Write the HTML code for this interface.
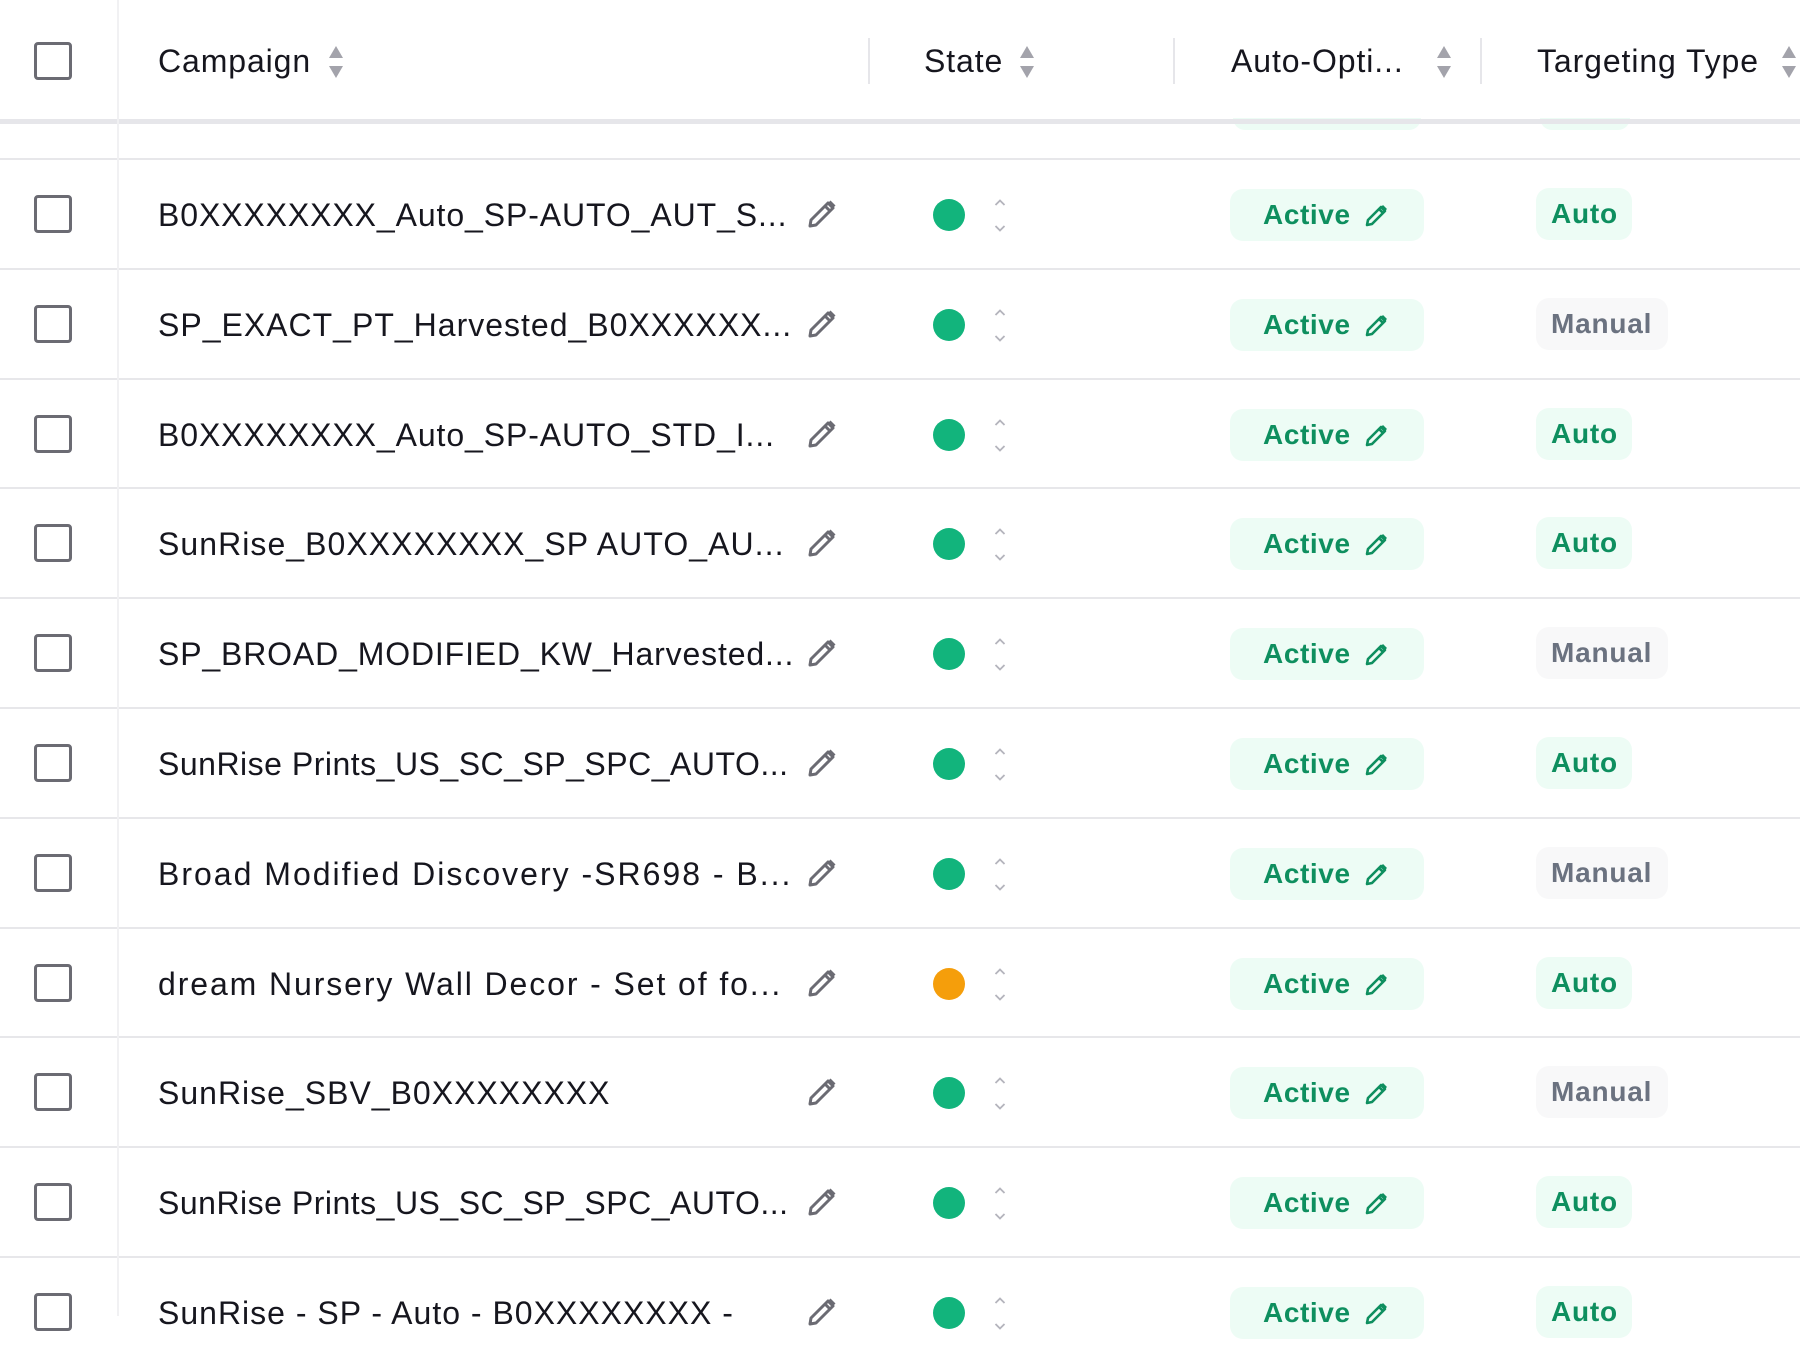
<!DOCTYPE html>
<html><head><meta charset="utf-8"><style>
*{box-sizing:border-box;margin:0;padding:0}
body{width:1800px;height:1316px;overflow:hidden;background:#fff;font-family:"Liberation Sans",sans-serif;position:relative;color:#1a1a22}
.abs{position:absolute}
.vline{position:absolute;left:117px;top:0;width:2px;height:1316px;background:#f1f1f3}
.hdrline{position:absolute;left:0;top:119px;width:1800px;height:5px;background:#e6e6ea}
.hdiv{position:absolute;top:38px;width:2px;height:46px;background:#e6e6ea}
.ht{position:absolute;top:42px;font-size:32px;letter-spacing:.9px;line-height:38px;color:#16161e}
.sort{position:absolute;top:44px;width:18px;height:36px}
.cb{position:absolute;left:34px;width:38px;height:38px;border:3.5px solid #6b6b73;border-radius:4px;background:#fff}
.row{position:absolute;left:0;width:1800px;height:110px;border-top:2px solid #e7e7ea}
.row .cb{top:35px}
.name{position:absolute;left:158px;top:36px;font-size:32px;letter-spacing:1px;line-height:38px;white-space:nowrap;color:#16161e}
.pen{position:absolute;left:804px;top:38px;width:34px;height:34px}
.dot{position:absolute;left:933px;top:39px;width:32px;height:32px;border-radius:50%;background:#12b47c}
.dot.o{background:#f59e0b}
.chev{position:absolute;left:992px;top:28px;width:16px;height:54px}
.pill{position:absolute;left:1230px;top:29px;width:194px;height:52px;border-radius:13px;background:#edfcf5;color:#0e8f5f;font-weight:bold;font-size:28px;letter-spacing:.6px;line-height:52px;padding-left:33px}
.pill svg{position:absolute;left:134px;top:13px}
.tag{position:absolute;left:1536px;top:28px;height:52px;border-radius:13px;font-weight:bold;font-size:28px;letter-spacing:.8px;line-height:52px;padding:0 15px}
.auto{background:#edfcf5;color:#0e8f5f;width:96px}
.man{background:#f8f8f9;color:#6b7280;width:132px}
</style></head><body>
<div class="vline"></div>
<div class="cb" style="top:42px"></div>
<div class="ht" style="left:158px">Campaign</div>
<svg class="sort" style="left:327px" viewBox="0 0 18 36"><path d="M9 2 L16 14 H2 Z M9 34 L16 22 H2 Z" fill="#a3a3ab"/></svg>
<div class="hdiv" style="left:868px"></div>
<div class="ht" style="left:924px">State</div>
<svg class="sort" style="left:1018px" viewBox="0 0 18 36"><path d="M9 2 L16 14 H2 Z M9 34 L16 22 H2 Z" fill="#a3a3ab"/></svg>
<div class="hdiv" style="left:1173px"></div>
<div class="ht" style="left:1231px">Auto-Opti...</div>
<svg class="sort" style="left:1435px" viewBox="0 0 18 36"><path d="M9 2 L16 14 H2 Z M9 34 L16 22 H2 Z" fill="#a3a3ab"/></svg>
<div class="hdiv" style="left:1480px"></div>
<div class="ht" style="left:1537px">Targeting Type</div>
<svg class="sort" style="left:1780px" viewBox="0 0 18 36"><path d="M9 2 L16 14 H2 Z M9 34 L16 22 H2 Z" fill="#a3a3ab"/></svg>
<div class="abs" style="left:1233px;top:118px;width:188px;height:12px;border-radius:0 0 12px 12px;background:#edfcf5"></div>
<div class="abs" style="left:1540px;top:118px;width:90px;height:12px;border-radius:0 0 12px 12px;background:#edfcf5"></div>
<div class="hdrline"></div>

<svg width="0" height="0" style="position:absolute"><defs>
<g id="pen"><path d="M6 28 L7 22 L24 5 L29 10 L12 27 Z M21 8 L26 13" fill="none" stroke="#6b6b73" stroke-width="3" stroke-linejoin="round"/><path d="M24 5 L26.5 2.5 L31.5 7.5 L29 10 Z" fill="#6b6b73"/></g>
<g id="chev"><path d="M3.5 17 L8 12.5 L12.5 17 M3.5 38 L8 42.5 L12.5 38" fill="none" stroke="#b4b4bc" stroke-width="1.8"/></g>
<g id="ppen"><path d="M3 23 L4 18 L17 5 L21 9 L8 22 Z M15 7 L19 11" fill="none" stroke="#0e8f5f" stroke-width="2.6" stroke-linejoin="round"/><path d="M17 5 L19 3 L23 7 L21 9 Z" fill="#0e8f5f"/></g>
</defs></svg>

<div class="row" style="top:158px"><div class="cb"></div><div class="name" style="letter-spacing:.9px">B0XXXXXXXX_Auto_SP-AUTO_AUT_S...</div><svg class="pen" viewBox="0 0 34 34"><use href="#pen"/></svg><div class="dot"></div><svg class="chev" viewBox="0 0 16 54"><use href="#chev"/></svg><div class="pill">Active<svg width="26" height="26" viewBox="0 0 26 26"><use href="#ppen"/></svg></div><div class="tag auto">Auto</div></div>
<div class="row" style="top:267.8px"><div class="cb"></div><div class="name" style="letter-spacing:1px">SP_EXACT_PT_Harvested_B0XXXXXX...</div><svg class="pen" viewBox="0 0 34 34"><use href="#pen"/></svg><div class="dot"></div><svg class="chev" viewBox="0 0 16 54"><use href="#chev"/></svg><div class="pill">Active<svg width="26" height="26" viewBox="0 0 26 26"><use href="#ppen"/></svg></div><div class="tag man">Manual</div></div>
<div class="row" style="top:377.6px"><div class="cb"></div><div class="name" style="letter-spacing:.9px">B0XXXXXXXX_Auto_SP-AUTO_STD_I...</div><svg class="pen" viewBox="0 0 34 34"><use href="#pen"/></svg><div class="dot"></div><svg class="chev" viewBox="0 0 16 54"><use href="#chev"/></svg><div class="pill">Active<svg width="26" height="26" viewBox="0 0 26 26"><use href="#ppen"/></svg></div><div class="tag auto">Auto</div></div>
<div class="row" style="top:487.4px"><div class="cb"></div><div class="name" style="letter-spacing:1.05px">SunRise_B0XXXXXXXX_SP AUTO_AU...</div><svg class="pen" viewBox="0 0 34 34"><use href="#pen"/></svg><div class="dot"></div><svg class="chev" viewBox="0 0 16 54"><use href="#chev"/></svg><div class="pill">Active<svg width="26" height="26" viewBox="0 0 26 26"><use href="#ppen"/></svg></div><div class="tag auto">Auto</div></div>
<div class="row" style="top:597.2px"><div class="cb"></div><div class="name" style="letter-spacing:.85px">SP_BROAD_MODIFIED_KW_Harvested...</div><svg class="pen" viewBox="0 0 34 34"><use href="#pen"/></svg><div class="dot"></div><svg class="chev" viewBox="0 0 16 54"><use href="#chev"/></svg><div class="pill">Active<svg width="26" height="26" viewBox="0 0 26 26"><use href="#ppen"/></svg></div><div class="tag man">Manual</div></div>
<div class="row" style="top:707px"><div class="cb"></div><div class="name" style="letter-spacing:.5px">SunRise Prints_US_SC_SP_SPC_AUTO...</div><svg class="pen" viewBox="0 0 34 34"><use href="#pen"/></svg><div class="dot"></div><svg class="chev" viewBox="0 0 16 54"><use href="#chev"/></svg><div class="pill">Active<svg width="26" height="26" viewBox="0 0 26 26"><use href="#ppen"/></svg></div><div class="tag auto">Auto</div></div>
<div class="row" style="top:816.8px"><div class="cb"></div><div class="name" style="letter-spacing:2px">Broad Modified Discovery -SR698 - B...</div><svg class="pen" viewBox="0 0 34 34"><use href="#pen"/></svg><div class="dot"></div><svg class="chev" viewBox="0 0 16 54"><use href="#chev"/></svg><div class="pill">Active<svg width="26" height="26" viewBox="0 0 26 26"><use href="#ppen"/></svg></div><div class="tag man">Manual</div></div>
<div class="row" style="top:926.6px"><div class="cb"></div><div class="name" style="letter-spacing:1.9px">dream Nursery Wall Decor - Set of fo...</div><svg class="pen" viewBox="0 0 34 34"><use href="#pen"/></svg><div class="dot o"></div><svg class="chev" viewBox="0 0 16 54"><use href="#chev"/></svg><div class="pill">Active<svg width="26" height="26" viewBox="0 0 26 26"><use href="#ppen"/></svg></div><div class="tag auto">Auto</div></div>
<div class="row" style="top:1036.4px"><div class="cb"></div><div class="name" style="letter-spacing:1px">SunRise_SBV_B0XXXXXXXX</div><svg class="pen" viewBox="0 0 34 34"><use href="#pen"/></svg><div class="dot"></div><svg class="chev" viewBox="0 0 16 54"><use href="#chev"/></svg><div class="pill">Active<svg width="26" height="26" viewBox="0 0 26 26"><use href="#ppen"/></svg></div><div class="tag man">Manual</div></div>
<div class="row" style="top:1146.2px"><div class="cb"></div><div class="name" style="letter-spacing:.5px">SunRise Prints_US_SC_SP_SPC_AUTO...</div><svg class="pen" viewBox="0 0 34 34"><use href="#pen"/></svg><div class="dot"></div><svg class="chev" viewBox="0 0 16 54"><use href="#chev"/></svg><div class="pill">Active<svg width="26" height="26" viewBox="0 0 26 26"><use href="#ppen"/></svg></div><div class="tag auto">Auto</div></div>
<div class="row" style="top:1256px"><div class="cb"></div><div class="name" style="letter-spacing:1px">SunRise - SP - Auto - B0XXXXXXXX -</div><svg class="pen" viewBox="0 0 34 34"><use href="#pen"/></svg><div class="dot"></div><svg class="chev" viewBox="0 0 16 54"><use href="#chev"/></svg><div class="pill">Active<svg width="26" height="26" viewBox="0 0 26 26"><use href="#ppen"/></svg></div><div class="tag auto">Auto</div></div>
<div class="vline" style="z-index:5;opacity:.9"></div>
</body></html>
